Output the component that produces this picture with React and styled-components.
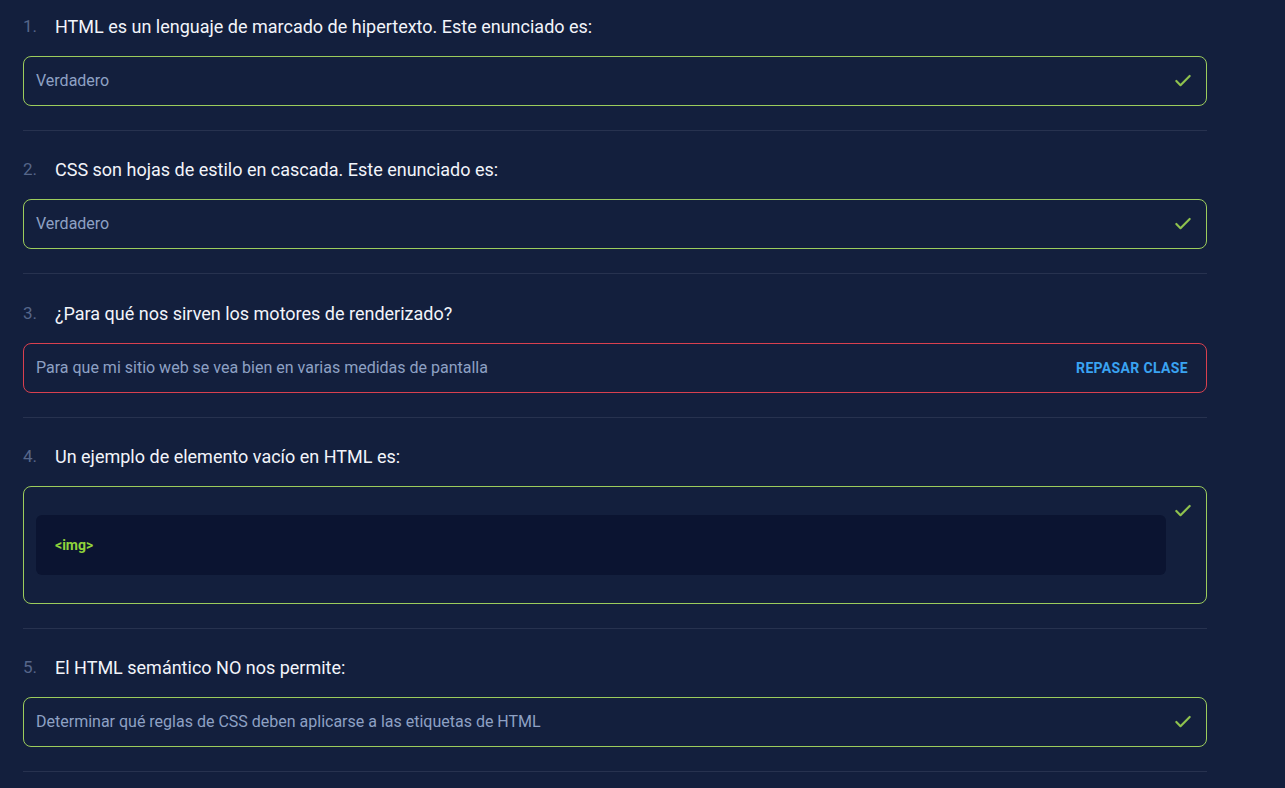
import React from "react";
import styled, { createGlobalStyle, css } from "styled-components";
import { Check } from "lucide-react";

const Global = createGlobalStyle`
  html, body { margin: 0; padding: 0; background: #131f3d; }
  body { font-family: Roboto, "Noto Sans", "Liberation Sans", sans-serif; }
`;

const Page = styled.div`
  min-height: 788px;
  background: #131f3d;
  padding: 0 78px 0 23px;
`;

const List = styled.ol`
  list-style: none;
  margin: 0;
  padding: 0;
  width: 1184px;
`;

const Item = styled.li`
  padding: 26px 0 24px;
  border-bottom: 1px solid #27324f;
  &:first-child { padding-top: 14px; }
  &:nth-child(3) { padding-top: 27px; }
`;

const Question = styled.div`
  display: flex;
  align-items: center;
  height: 24px;
  margin-bottom: 18px;
  font-size: 18px;
  color: #f2f4fa;
  font-weight: 400;
`;

const Num = styled.span`
  width: 32px;
  color: #56668a;
  font-weight: 400;
  font-size: 17px;
`;

const Answer = styled.div`
  display: flex;
  align-items: flex-start;
  border: 1px solid ${(p) => (p.$wrong ? "#d8404f" : "#9ccc5c")};
  border-radius: 8px;
  padding: 0 13px 0 12px;
`;

const AnswerText = styled.div`
  flex: 1;
  line-height: 48px;
  font-size: 16px;
  color: #8ea1c4;
`;

const Side = styled.div`
  height: 48px;
  display: flex;
  align-items: center;
  color: #8fc24e;
  ${(p) =>
    p.$code &&
    css`
      padding-left: 7px;
    `}
`;

const Review = styled.a`
  font-size: 14px;
  font-weight: 700;
  letter-spacing: 0.35px;
  color: #3aa3f2;
  text-transform: uppercase;
  text-decoration: none;
  cursor: pointer;
  margin-right: 5px;
`;

const CodeBlock = styled.div`
  flex: 1;
  margin: 28px 0;
  height: 60px;
  display: flex;
  align-items: center;
  padding: 0 19px;
  border-radius: 6px;
  background: #0b1431;
  color: #8fd33b;
  font-size: 14px;
  font-weight: 700;
`;

const questions = [
  { q: "HTML es un lenguaje de marcado de hipertexto. Este enunciado es:", a: "Verdadero" },
  { q: "CSS son hojas de estilo en cascada. Este enunciado es:", a: "Verdadero" },
  { q: "¿Para qué nos sirven los motores de renderizado?", a: "Para que mi sitio web se vea bien en varias medidas de pantalla", wrong: true },
  { q: "Un ejemplo de elemento vacío en HTML es:", code: "<img>" },
  { q: "El HTML semántico NO nos permite:", a: "Determinar qué reglas de CSS deben aplicarse a las etiquetas de HTML" },
];

export default function App() {
  return (
    <Page>
      <Global />
      <List>
        {questions.map((item, i) => (
          <Item key={i}>
            <Question>
              <Num>{i + 1}.</Num>
              {item.q}
            </Question>
            <Answer $wrong={item.wrong}>
              {item.code ? (
                <CodeBlock>{item.code}</CodeBlock>
              ) : (
                <AnswerText>{item.a}</AnswerText>
              )}
              <Side $code={!!item.code}>
                {item.wrong ? (
                  <Review>Repasar clase</Review>
                ) : (
                  <Check size={20} strokeWidth={2.6} />
                )}
              </Side>
            </Answer>
          </Item>
        ))}
      </List>
    </Page>
  );
}
